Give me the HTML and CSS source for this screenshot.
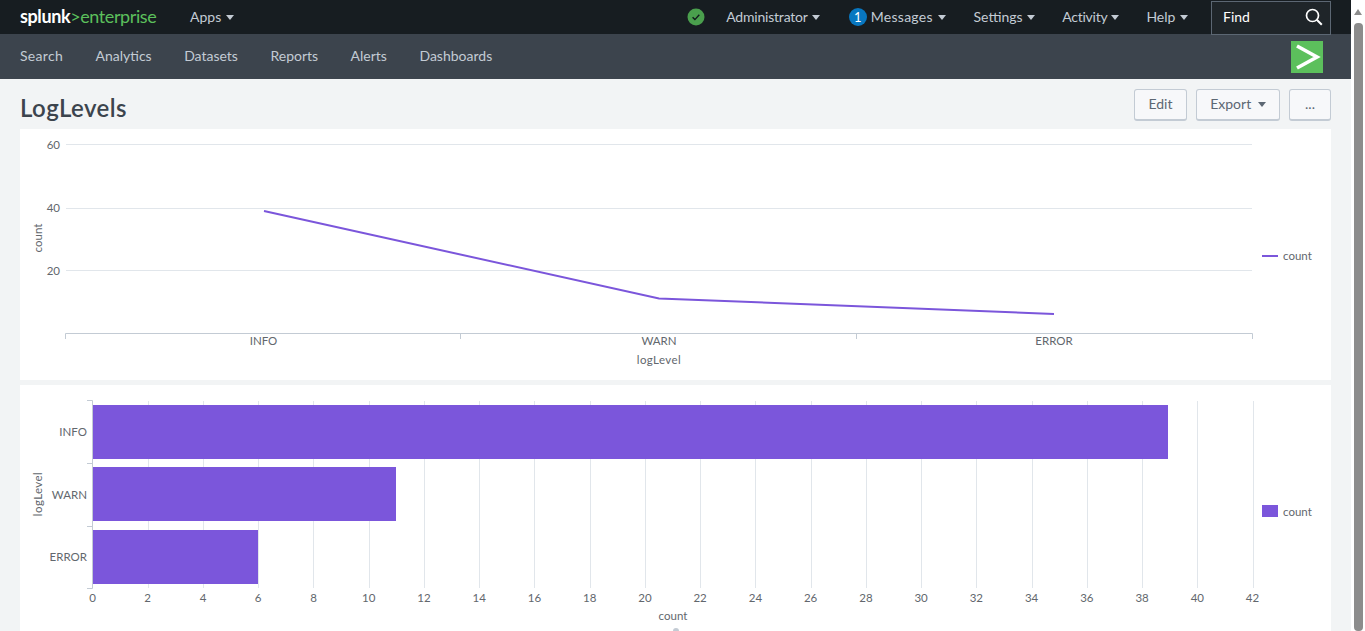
FILE: index.html
```html
<!DOCTYPE html>
<html lang="en">
<head>
    <meta charset="UTF-8">
    <title>LogLevels | Splunk</title>
    <link rel="stylesheet" href="styles.css">
</head>
<body>
<div class="page">
    <div class="main">
        <header class="topbar">
            <a class="logo"><b>splunk</b><span>&gt;enterprise</span></a>
            <a class="menu apps">Apps <i class="caret"></i></a>
            <div class="topbar-right">
                <svg class="status" width="18" height="18" viewBox="0 0 18 18">
                    <circle cx="9" cy="9" r="8.5" fill="#4a9f4d"/>
                    <path d="M5.6 9.2l2.3 2.4 4.4-4.8" fill="none" stroke="#10181c" stroke-width="1.4"/>
                </svg>
                <a class="menu admin">Administrator <i class="caret"></i></a>
                <span class="badge">1</span>
                <a class="menu messages">Messages <i class="caret"></i></a>
                <a class="menu settings">Settings <i class="caret"></i></a>
                <a class="menu activity">Activity <i class="caret"></i></a>
                <a class="menu help">Help <i class="caret"></i></a>
                <div class="find">
                    <span>Find</span>
                    <svg width="18" height="18" viewBox="0 0 18 18">
                        <circle cx="7.5" cy="7.5" r="6" fill="none" stroke="#fff" stroke-width="1.7"/>
                        <path d="M11.8 11.8l5 5" stroke="#fff" stroke-width="2"/>
                    </svg>
                </div>
            </div>
        </header>

        <nav class="appbar">
            <a class="nav-search">Search</a>
            <a>Analytics</a>
            <a>Datasets</a>
            <a>Reports</a>
            <a>Alerts</a>
            <a>Dashboards</a>
            <div class="app-logo">
                <svg width="32" height="32" viewBox="0 0 32 32">
                    <path d="M6 5l20 11L6 27" fill="none" stroke="#fff" stroke-width="3.6"/>
                </svg>
            </div>
        </nav>

        <div class="title-row">
            <h1>LogLevels</h1>
            <div class="actions">
                <button class="btn btn-edit">Edit</button>
                <button class="btn btn-export">Export <i class="caret dark"></i></button>
                <button class="btn btn-more">...</button>
            </div>
        </div>

        <section class="panel panel-line">
            <svg width="1311" height="251" viewBox="20 129 1311 251">
                <g class="grid">
                    <path d="M66 144.5H1252M66 208.5H1252M66 270.5H1252"/>
                </g>
                <path class="axis" d="M65.5 339V333.5H1252.5V339M460.5 333.5V339M856.5 333.5V339"/>
                <text class="tick end" x="60" y="149">60</text>
                <text class="tick end" x="60" y="212">40</text>
                <text class="tick end" x="60" y="275">20</text>
                <text class="tick mid" x="263.5" y="345">INFO</text>
                <text class="tick mid" x="659" y="345">WARN</text>
                <text class="tick mid" x="1054" y="345">ERROR</text>
                <text class="tick mid wide" x="659" y="364">logLevel</text>
                <text class="tick mid" transform="translate(42 238) rotate(-90)">count</text>
                <polyline class="series" points="264,211 659,298.5 1054,314"/>
                <path class="series" d="M1262 256H1278"/>
                <text class="tick" x="1283" y="260">count</text>
            </svg>
        </section>

        <section class="panel panel-bar">
            <svg width="1311" height="246" viewBox="20 385 1311 246">
                <path id="bar-grid" class="grid-line"/>
                <path class="axis" d="M87 400.5H92.5V588.5H87M87 463.5H92.5M87 526.5H92.5"/>
                <g class="bars">
                    <rect x="93" y="405" width="1075" height="54"/>
                    <rect x="93" y="467" width="303" height="54"/>
                    <rect x="93" y="530" width="165" height="54"/>
                    <rect x="1262" y="505" width="16" height="12"/>
                </g>
                <text class="tick end" x="87" y="436">INFO</text>
                <text class="tick end" x="87" y="499">WARN</text>
                <text class="tick end" x="87" y="561">ERROR</text>
                <g id="bar-labels"></g>
                <text class="tick mid" x="673" y="620">count</text>
                <text class="tick mid wide" transform="translate(42 494) rotate(-90)">logLevel</text>
                <text class="tick" x="1283" y="516">count</text>
                <circle class="handle" cx="676" cy="631" r="3"/>
            </svg>
        </section>
    </div>

    <div class="scrollbar">
        <i class="scroll-up"></i>
        <div class="scroll-thumb"></div>
    </div>
</div>

<script>
    // x axis of the bar chart, 0 to 42 by 2
    let grid = '';
    let labels = '';
    for (let v = 0; v <= 42; v += 2) {
        let x = 92.5 + v * 27.62;
        if (v > 0) grid += `M${Math.round(x) + 0.5} 401V588`;
        labels += `<text class="tick mid" x="${x.toFixed(1)}" y="602">${v}</text>`;
    }
    document.getElementById('bar-grid').setAttribute('d', grid);
    document.getElementById('bar-labels').innerHTML = labels;
</script>
</body>
</html>
```

FILE: styles.css
```css
* {
    box-sizing: border-box;
}

html, body {
    margin: 0;
    height: 631px;
    overflow: hidden;
}

body {
    font-family: Lato, "Liberation Sans", sans-serif;
    background-color: #f2f4f5;
}

.page {
    display: flex;
    height: 631px;
}

.main {
    flex: 1;
    min-width: 0;
}

.caret {
    display: inline-block;
    width: 0;
    height: 0;
    margin-left: 1px;
    vertical-align: 2px;
    border-left: 4px solid transparent;
    border-right: 4px solid transparent;
    border-top: 5px solid #c3cbd4;
}

.caret.dark {
    border-top-color: #5c6773;
    margin-left: 3px;
}

/* top bar */
.topbar {
    display: flex;
    align-items: center;
    height: 34px;
    padding-left: 20px;
    background-color: #171d21;
}

.logo {
    width: 170px;
    margin-top: -2px;
    font-size: 18px;
    color: #5cc05c;
}

.logo b {
    color: #fff;
    letter-spacing: -0.4px;
}

.logo span {
    letter-spacing: -0.4px;
}

.menu {
    margin-top: -2px;
    font-size: 14px;
    color: #c3cbd4;
    white-space: nowrap;
}

.topbar-right {
    display: flex;
    align-items: center;
    height: 34px;
    margin-left: auto;
    margin-right: 20px;
}

.status {
    margin-top: -1px;
    margin-right: 21px;
}

.admin {
    margin-right: 29px;
    letter-spacing: -0.2px;
}

.badge {
    width: 18px;
    height: 18px;
    margin-top: -1px;
    margin-right: 4px;
    border-radius: 50%;
    background-color: #0877c0;
    color: #fff;
    font-size: 13px;
    line-height: 18px;
    text-align: center;
}

.messages {
    margin-right: 28px;
    letter-spacing: 0.25px;
}

.settings {
    margin-right: 27px;
}

.activity {
    margin-right: 27px;
    letter-spacing: -0.25px;
}

.help {
    margin-right: 23px;
}

.find {
    display: flex;
    align-items: center;
    justify-content: space-between;
    width: 120px;
    height: 34px;
    margin-top: 1px;
    padding: 0 7px 2px 11px;
    border: 1px solid #5c6773;
    background-color: #1f2529;
    color: #fff;
    font-size: 14px;
}

/* app bar */
.appbar {
    display: flex;
    align-items: center;
    gap: 32.5px;
    height: 45px;
    padding: 0 28px 0 20px;
    background-color: #3c444d;
}

.appbar a {
    margin-top: -2px;
    font-size: 14px;
    color: #c3cbd4;
}

.appbar .nav-search {
    letter-spacing: 0.3px;
}

.app-logo {
    display: flex;
    width: 32px;
    height: 32px;
    margin-left: auto;
    background-color: #5cc05c;
}

/* title */
.title-row {
    display: flex;
    align-items: flex-start;
    justify-content: space-between;
    height: 50px;
    padding: 10px 20px 0;
}

h1 {
    margin: 4px 0 0;
    font-size: 24px;
    font-weight: 600;
    line-height: 29px;
    letter-spacing: 0.45px;
    color: #3c444d;
}

.actions {
    display: flex;
    gap: 9px;
}

.btn {
    height: 32px;
    padding: 0 0 2px;
    border: 1px solid #c3cbd4;
    border-bottom-width: 2px;
    border-radius: 3px;
    background-color: #f7f8fa;
    color: #5c6773;
    font-family: inherit;
    font-size: 14px;
}

.btn-edit {
    width: 53px;
}

.btn-export {
    width: 84px;
}

.btn-more {
    width: 42px;
}

/* panels */
.panel {
    margin: 0 20px;
    background-color: #fff;
}

.panel svg {
    display: block;
}

.panel-line {
    height: 251px;
    margin-bottom: 5px;
}

.panel-bar {
    height: 246px;
}

.grid path, .grid-line {
    fill: none;
    stroke: #e1e6eb;
    stroke-width: 1;
}

.axis {
    fill: none;
    stroke: #c3cbd4;
    stroke-width: 1;
}

.tick {
    font-family: Lato, "Liberation Sans", sans-serif;
    font-size: 11.5px;
    fill: #62676d;
}

.wide {
    letter-spacing: 0.4px;
}

.end {
    text-anchor: end;
}

.mid {
    text-anchor: middle;
}

.series {
    fill: none;
    stroke: #7b56db;
    stroke-width: 2;
}

.bars rect {
    fill: #7b56db;
}

.handle {
    fill: #c3cbd4;
}

/* scrollbar */
.scrollbar {
    position: relative;
    flex: none;
    width: 14px;
    background-color: #fff;
}

.scroll-up {
    position: absolute;
    top: 9px;
    left: 3px;
    width: 0;
    height: 0;
    border-left: 4px solid transparent;
    border-right: 4px solid transparent;
    border-bottom: 6px solid #8c8c8c;
}

.scroll-thumb {
    position: absolute;
    top: 23px;
    left: 3px;
    width: 9px;
    height: 608px;
    border-radius: 4px;
    background-color: #8c8c8c;
}
```
